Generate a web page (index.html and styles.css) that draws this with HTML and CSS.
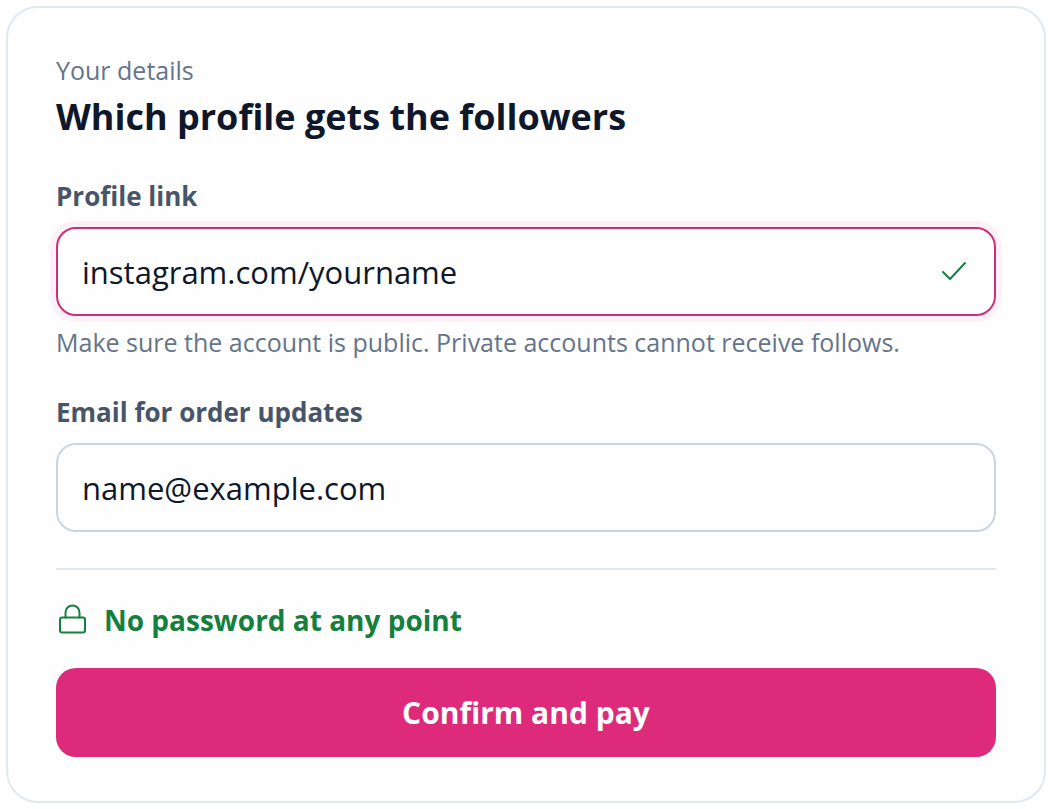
FILE: index.html
```
<!DOCTYPE html>
<html lang="en">
<head>
  <meta charset="UTF-8">
  <meta name="viewport" content="width=device-width, initial-scale=1.0">
  <title>Your details</title>
  <link rel="stylesheet" href="styles.css">
</head>
<body>
  <form class="card">
    <header class="card-header">
      <p class="eyebrow">Your details</p>
      <h1>Which profile gets the followers</h1>
    </header>

    <div class="field">
      <label for="profile">Profile link</label>
      <div class="control active">
        <input type="text" id="profile" name="profile" value="instagram.com/yourname" aria-describedby="profile-hint">
        <svg class="check" viewBox="0 0 28 28" aria-hidden="true">
          <path d="M3 14l7 7L25 5"/>
        </svg>
      </div>
      <p class="hint" id="profile-hint">Make sure the account is public. Private accounts cannot receive follows.</p>
    </div>

    <div class="field">
      <label for="email">Email for order updates</label>
      <div class="control">
        <input type="email" id="email" name="email" value="name@example.com">
      </div>
    </div>

    <footer class="card-footer">
      <p class="secure">
        <svg class="lock" viewBox="0 0 32 32" aria-hidden="true">
          <rect x="4" y="13.5" width="25" height="15" rx="2"/>
          <path d="M9.5 13.5V8.5a7 7 0 0 1 14 0v5"/>
        </svg>
        <span>No password at any point</span>
      </p>
      <button type="submit">Confirm and pay</button>
    </footer>
  </form>
</body>
</html>
```

FILE: styles.css
```
* {
  box-sizing: border-box;
}
body {
  margin: 6px;
  font-family: "Segoe UI", "Open Sans", "Noto Sans", sans-serif;
  background: #fff;
  color: #0f172a;
}
h1, p {
  margin: 0;
}
.card {
  padding: 44px 48px;
  background: #fefefe;
  border: 2px solid #e2e8f0;
  border-radius: 32px;
}
.card-header {
  margin-bottom: 32px;
}
.eyebrow, .hint {
  font-size: 25px;
  line-height: 36px;
  color: #64748b;
}
h1 {
  font-size: 36px;
  line-height: 58px;
  font-weight: 700;
}
.field + .field {
  margin-top: 34px;
}
label {
  display: block;
  margin-bottom: 13px;
  font-size: 26px;
  line-height: 36px;
  font-weight: 700;
  color: #475569;
}
.control {
  display: flex;
  align-items: center;
  padding: 0 26px 0 24px;
  border: 2px solid #cbd5e1;
  border-radius: 20px;
}
.control.active {
  border-color: #cf2f74;
  box-shadow: 0 0 0 6px #fdf0f6;
}
input {
  flex: 1;
  min-width: 0;
  height: 85px;
  padding: 0;
  border: none;
  outline: none;
  background: none;
  font-family: inherit;
  font-size: 31px;
  color: inherit;
}
.check, .lock {
  flex: none;
  fill: none;
  stroke: #15803d;
  stroke-width: 2;
  stroke-linecap: round;
  stroke-linejoin: round;
}
.check {
  width: 28px;
  height: 28px;
}
.hint {
  margin-top: 8px;
}
.card-footer {
  margin-top: 36px;
  padding-top: 32px;
  border-top: 2px solid #e2e8f0;
}
.secure {
  display: flex;
  align-items: center;
  gap: 16px;
  margin-bottom: 30px;
  font-size: 28px;
  line-height: 36px;
  font-weight: 700;
  color: #15803d;
}
.lock {
  width: 32px;
  height: 32px;
}
button {
  display: block;
  width: 100%;
  height: 89px;
  border: none;
  border-radius: 20px;
  background: #de2a7a;
  color: #fff;
  font-family: inherit;
  font-size: 30px;
  font-weight: 700;
  cursor: pointer;
}
```
